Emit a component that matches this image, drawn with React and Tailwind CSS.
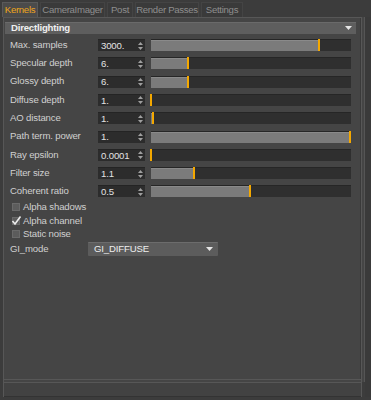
import React from 'react';

// Dados das linhas com campo numérico + slider
const rows = [
  { label: 'Max. samples', value: '3000.', pct: 84 },
  { label: 'Specular depth', value: '6.', pct: 18.7 },
  { label: 'Glossy depth', value: '6.', pct: 18.7 },
  { label: 'Diffuse depth', value: '1.', pct: 0 },
  { label: 'AO distance', value: '1.', pct: 1 },
  { label: 'Path term. power', value: '1.', pct: 99.5 },
  { label: 'Ray epsilon', value: '0.0001', pct: 0 },
  { label: 'Filter size', value: '1.1', pct: 21.7 },
  { label: 'Coherent ratio', value: '0.5', pct: 49.5 },
];

const tabs = [
  { name: 'Kernels', w: 'w-[36px]', active: true },
  { name: 'CameraImager', w: 'w-[65px]' },
  { name: 'Post', w: 'w-[26px]' },
  { name: 'Render Passes', w: 'w-[64px]' },
  { name: 'Settings', w: 'w-[42px]' },
];

function Spinner() {
  return (
    <svg width="5" height="8" viewBox="0 0 5 8" className="shrink-0">
      <polygon points="2.5,0 5,3 0,3" fill="#a0a0a0" />
      <polygon points="0,5 5,5 2.5,8" fill="#a0a0a0" />
    </svg>
  );
}

function Row({ label, value, pct }) {
  return (
    <div className="flex items-center h-[18.3px]">
      <div className="w-[93px] pl-[5px] text-[#d0d0d0] whitespace-nowrap">{label}</div>
      <div className="w-[47px] h-[12px] bg-[#2c2c2c] border-t border-[#242424] flex items-center justify-between pl-[3px] pr-[2px] text-[#e2e2e2]">
        <span className="leading-none">{value}</span>
        <Spinner />
      </div>
      <div className="ml-[6px] w-[200px] h-[12px] bg-[#2f2f2f] border-t border-[#262626] relative">
        <div className="h-full bg-[#7b7b7b] border-t border-[#8a8a8a]" style={{ width: pct + '%' }} />
        <div className="absolute top-[-1px] w-[2px] h-[12px] bg-[#f4a800]" style={{ left: `calc(${pct}% - 1px)` }} />
      </div>
    </div>
  );
}

function CheckRow({ label, checked }) {
  return (
    <div className="flex items-center h-[13.5px] pl-[7px]">
      <div className="relative w-[8px] h-[8px] bg-[#5c5c5c] border border-[#6a6a6a]">
        {checked && (
          <svg width="11" height="11" viewBox="0 0 11 11" className="absolute left-[-2px] top-[-3px]">
            <path d="M1.5 6 L4 9 L9.5 1.5" stroke="#ececec" strokeWidth="1.6" fill="none" />
          </svg>
        )}
      </div>
      <span className="ml-[3px] text-[#d0d0d0]">{label}</span>
    </div>
  );
}

export default function App() {
  return (
    <div className="w-[371px] h-[400px] bg-[#3c3c3c] overflow-hidden text-[9.6px] tracking-[-0.15px] font-['Liberation_Sans',Arial,sans-serif] select-none">
      {/* Abas */}
      <div className="flex items-end h-[17px] pl-[2px] gap-[2px]">
        {tabs.map((t) => (
          <div
            key={t.name}
            className={`${t.w} h-[15px] flex items-center justify-center whitespace-nowrap tracking-[-0.3px] border-t border-x ${
              t.active
                ? 'bg-[#4b4b4b] border-[#5a5a5a] text-[#eea51c]'
                : 'bg-[#3a3a3a] border-[#444] text-[#8e8e8e]'
            }`}
          >
            {t.name}
          </div>
        ))}
      </div>

      <div className="flex h-[383px]">
        {/* Painel principal */}
        <div className="ml-[3px] w-[359px] h-[380px] bg-[#454545] border-t border-x border-[#575757] flex flex-col">
          <div className="flex-1 border-r border-[#3a3a3a] pt-[4px] pl-[1px] flex">
            <div className="w-[351px]">
              {/* Cabeçalho Directlighting */}
              <div className="h-[11.5px] bg-[#5e5e5e] border-t border-[#6a6a6a] flex items-center justify-between pl-[6px] pr-[4px] mb-[2.4px]">
                <span className="text-[#f0f0f0] font-bold tracking-[-0.2px]">Directlighting</span>
                <svg width="7" height="5" viewBox="0 0 7 5">
                  <polygon points="0,0 7,0 3.5,4" fill="#e6e6e6" />
                </svg>
              </div>

              {rows.map((r) => (
                <Row key={r.label} {...r} />
              ))}

              <CheckRow label="Alpha shadows" />
              <CheckRow label="Alpha channel" checked />
              <CheckRow label="Static noise" />

              <div className="flex items-center h-[16px]">
                <div className="w-[83px] pl-[5px] text-[#d0d0d0]">GI_mode</div>
                <div className="w-[130px] h-[14px] bg-[#5c5c5c] border-t border-[#6c6c6c] rounded-[1px] flex items-center justify-between pl-[6px] pr-[5px]">
                  <span className="text-[#eeeeee]">GI_DIFFUSE</span>
                  <svg width="7" height="5" viewBox="0 0 7 5">
                    <polygon points="0,0 7,0 3.5,4" fill="#e6e6e6" />
                  </svg>
                </div>
              </div>
            </div>
            <div className="flex-1" />
          </div>
          {/* Borda inferior do painel */}
          <div className="h-[4px] border-t border-[#575757] border-b border-[#333]" />
          {/* Faixa inferior */}
          <div className="h-[14px] bg-[#424242] border-b border-[#333]" />
        </div>
        {/* Coluna direita */}
        <div className="w-[9px] h-[380px] flex">
          <div className="w-[3px] h-[365px] bg-[#454545] border-r border-[#555]" />
          <div className="flex-1 bg-[#3a3a3a]" />
        </div>
      </div>
    </div>
  );
}
